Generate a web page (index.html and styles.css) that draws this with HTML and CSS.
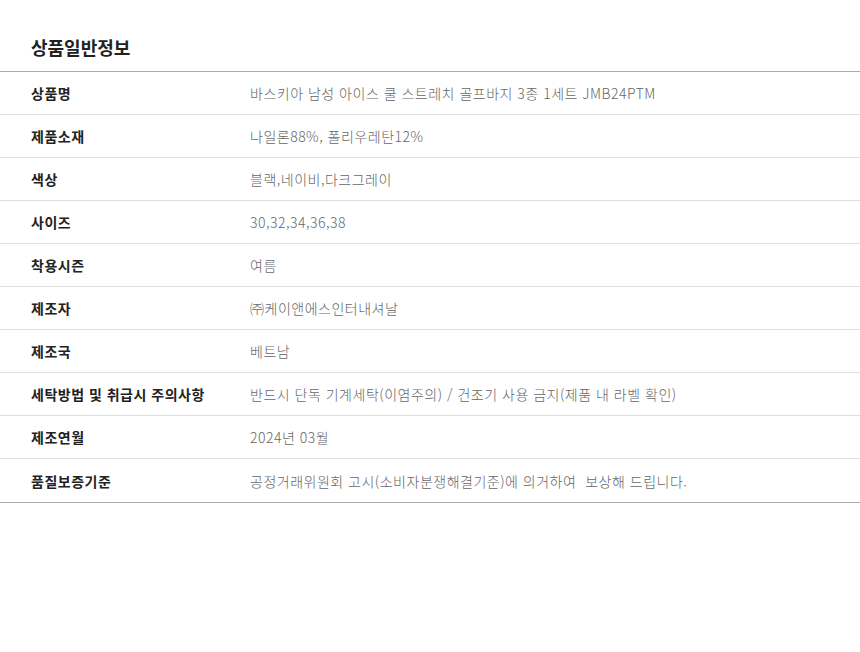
FILE: index.html
```html
<!DOCTYPE html>
<html lang="ko">
<head>
<meta charset="utf-8">
<link rel="stylesheet" href="styles.css">
</head>
<body>
<section class="info">
  <h2 class="info-title">상품일반정보</h2>
  <table class="info-table">
    <tbody>
      <tr><th>상품명</th><td>바스키아 남성 아이스 쿨 스트레치 골프바지 3종 1세트 JMB24PTM</td></tr>
      <tr><th>제품소재</th><td>나일론88%, 폴리우레탄12%</td></tr>
      <tr><th>색상</th><td>블랙,네이비,다크그레이</td></tr>
      <tr><th>사이즈</th><td>30,32,34,36,38</td></tr>
      <tr><th>착용시즌</th><td>여름</td></tr>
      <tr><th>제조자</th><td>㈜케이앤에스인터내셔날</td></tr>
      <tr><th>제조국</th><td>베트남</td></tr>
      <tr><th>세탁방법 및 취급시 주의사항</th><td>반드시 단독 기계세탁(이염주의) / 건조기 사용 금지(제품 내 라벨 확인)</td></tr>
      <tr><th>제조연월</th><td>2024년 03월</td></tr>
      <tr class="last"><th>품질보증기준</th><td>공정거래위원회 고시(소비자분쟁해결기준)에 의거하여&nbsp; 보상해 드립니다.</td></tr>
    </tbody>
  </table>
</section>
</body>
</html>
```

FILE: styles.css
```css
html, body {
  margin: 0;
  padding: 0;
  background: #fff;
}
body {
  font-family: "Noto Sans CJK KR", "Noto Sans", sans-serif;
  width: 860px;
}
.info-title {
  margin: 0;
  padding: 34px 0 11px 31px;
  height: 26px;
  line-height: 26px;
  font-size: 18px;
  font-weight: 700;
  color: #222;
}
.info-table {
  width: 860px;
  border-collapse: collapse;
  border-top: 1px solid #aaa;
  border-bottom: 1px solid #aaa;
}
.info-table th,
.info-table td {
  height: 42px;
  padding: 0;
  border-bottom: 1px solid #ddd;
  font-size: 14px;
  line-height: 20px;
  letter-spacing: 0.5px;
  text-align: left;
  vertical-align: middle;
}
.info-table .last th,
.info-table .last td {
  height: 43px;
  border-bottom: 1px solid #aaa;
}
.info-table th {
  width: 219px;
  padding-left: 31px;
  font-weight: 700;
  color: #222;
}
.info-table td {
  font-weight: 300;
  color: #666;
}
```
